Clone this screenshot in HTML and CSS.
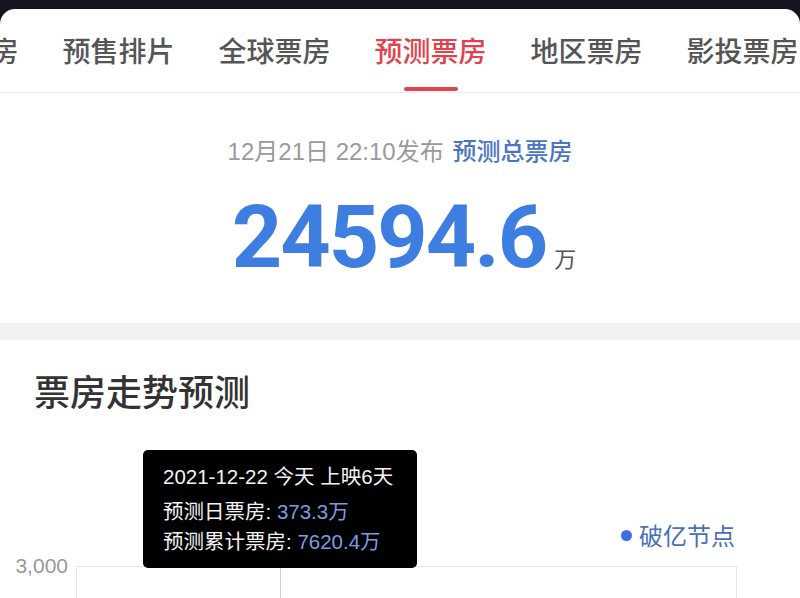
FILE: index.html
```html
<!DOCTYPE html>
<html lang="zh-CN">
<head>
<meta charset="utf-8">
<title>预测票房</title>
<link rel="stylesheet" href="styles.css">
</head>
<body>
<div class="sheet">
  <nav class="tabs">
    <div class="tab-track">
      <div class="tab">实时票房</div>
      <div class="tab">预售排片</div>
      <div class="tab">全球票房</div>
      <div class="tab active">预测票房</div>
      <div class="tab">地区票房</div>
      <div class="tab">影投票房</div>
    </div>
  </nav>
  <section class="summary">
    <div class="meta"><span class="time">12月21日 22:10发布</span> <span class="label">预测总票房</span></div>
    <div class="total"><span class="num">24594.6</span><span class="unit">万</span></div>
  </section>
  <div class="divider"></div>
  <section class="trend">
    <h2 class="title">票房走势预测</h2>
    <div class="chart">
      <div class="legend"><span class="dot"></span><span>破亿节点</span></div>
      <div class="axis-row">
        <div class="ylabel">3,000</div>
        <div class="plot">
          <div class="crosshair"></div>
        </div>
      </div>
      <div class="tooltip">
        <div class="tip-head">2021-12-22 今天 上映6天</div>
        <div class="tip-line">预测日票房: <span class="tip-val">373.3万</span></div>
        <div class="tip-line">预测累计票房: <span class="tip-val">7620.4万</span></div>
      </div>
    </div>
  </section>
</div>
</body>
</html>
```

FILE: styles.css
```css
html, body {
  margin: 0;
  padding: 0;
  background: #15151f;
  height: 598px;
  overflow: hidden;
}
body {
  font-family: "Liberation Sans", "Noto Sans CJK SC", sans-serif;
}
.sheet {
  margin-top: 9px;
  background: #fff;
  border-radius: 15px 15px 0 0;
  height: 589px;
  overflow: hidden;
}
.tabs {
  border-bottom: 1px solid #e8e8e8;
  overflow: hidden;
}
.tab-track {
  display: flex;
  gap: 43px;
  margin-left: -94px;
}
.tab {
  position: relative;
  flex: none;
  width: 113px;
  text-align: center;
  font-family: "Noto Sans CJK SC", sans-serif;
  font-size: 28px;
  line-height: 28px;
  font-weight: 500;
  color: #555;
  padding: 27px 0 28px;
  white-space: nowrap;
}
.tab.active {
  color: #e0424e;
}
.tab.active::after {
  content: "";
  position: absolute;
  left: 30px;
  width: 54px;
  bottom: 1px;
  height: 4px;
  border-radius: 2px;
  background: #e0424e;
}
.summary {
  padding: 42px 0 0;
  height: 188px;
  text-align: center;
}
.meta {
  font-size: 24px;
  line-height: 30px;
  color: #9a9a9a;
}
.meta .label {
  color: #4a74c4;
  font-family: "Noto Sans CJK SC", sans-serif;
  font-weight: 500;
  margin-left: 2px;
}
.total {
  margin-top: 26px;
  line-height: 88px;
  display: flex;
  justify-content: center;
  align-items: baseline;
  padding-left: 8px;
}
.num {
  font-family: Roboto, "Liberation Sans", sans-serif;
  font-weight: 700;
  font-size: 88px;
  letter-spacing: -2px;
  color: #3d7ee0;
}
.unit {
  font-family: "Noto Sans CJK SC", sans-serif;
  font-size: 22px;
  line-height: 22px;
  color: #555;
  margin-left: 8px;
}
.divider {
  height: 17px;
  background: #f2f2f2;
}
.trend {
  padding-top: 30px;
}
.title {
  margin: 0;
  padding-left: 34px;
  font-family: "Noto Sans CJK SC", sans-serif;
  font-size: 36px;
  line-height: 40px;
  font-weight: 500;
  color: #333;
}
.chart {
  position: relative;
  padding-top: 110px;
  height: 100px;
}
.legend {
  display: flex;
  justify-content: flex-end;
  align-items: center;
  padding-right: 65px;
  font-family: "Noto Sans CJK SC", sans-serif;
  font-size: 24px;
  line-height: 30px;
  color: #4a6fb5;
}
.dot {
  width: 11px;
  height: 11px;
  border-radius: 50%;
  background: #3d6fe0;
  margin-right: 7px;
}
.axis-row {
  display: flex;
  margin-top: 16px;
}
.ylabel {
  width: 68px;
  padding-right: 8px;
  text-align: right;
  font-size: 21px;
  line-height: 24px;
  margin-top: -12px;
  color: #999;
}
.plot {
  position: relative;
  width: 659px;
  height: 60px;
  border: 1px solid #e6e6e6;
  border-bottom: none;
}
.crosshair {
  position: absolute;
  left: 203px;
  top: 0;
  bottom: 0;
  width: 1px;
  background: #cfcfcf;
}
.tooltip {
  position: absolute;
  left: 143px;
  top: 40px;
  width: 254px;
  padding: 12px 0 11px 20px;
  background: #000;
  border-radius: 5px;
  color: #f2f2f2;
  font-size: 20.5px;
  line-height: 30px;
}
.tip-head {
  margin-bottom: 5px;
}
.tip-val {
  color: #7d9be3;
}
```
